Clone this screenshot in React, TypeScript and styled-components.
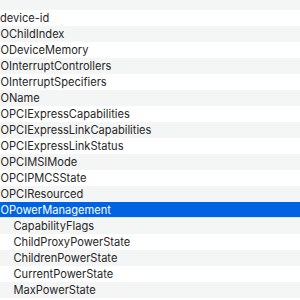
import React from 'react';
import styled, { createGlobalStyle } from 'styled-components';

const GlobalStyle = createGlobalStyle`
    html, body {
        margin: 0;
        padding: 0;
        background: #ffffff;
        overflow: hidden;
    }
`;

const List = styled.div`
    width: 300px;
    height: 300px;
    overflow: hidden;
    font-family: Inter, "Liberation Sans", Arial, sans-serif;
    font-size: 11.1px;
`;

const Inner = styled.div`
    margin-top: -6px;
    display: flex;
    flex-direction: column;
`;

const Row = styled.div<{ $odd: boolean; $selected?: boolean; $indent: number }>`
    height: 16px;
    flex: none;
    padding-left: ${props => props.$indent}px;
    background: ${props =>
        props.$selected ? '#0063e1' : props.$odd ? '#f4f5f5' : '#ffffff'};
    box-shadow: ${props => (props.$selected ? 'inset 0 -1px 0 #d9e6f7' : 'none')};
    color: ${props => (props.$selected ? '#ffffff' : '#262626')};
    white-space: nowrap;
    line-height: 16px;
`;

type Item = { label: string; indent: number; selected?: boolean };

const items: Item[] = [
    { label: '', indent: 0 },
    { label: 'device-id', indent: 0 },
    { label: 'OChildIndex', indent: 0.5 },
    { label: 'ODeviceMemory', indent: 0.5 },
    { label: 'OInterruptControllers', indent: 0.5 },
    { label: 'OInterruptSpecifiers', indent: 0.5 },
    { label: 'OName', indent: 0.5 },
    { label: 'OPCIExpressCapabilities', indent: 0.5 },
    { label: 'OPCIExpressLinkCapabilities', indent: 0.5 },
    { label: 'OPCIExpressLinkStatus', indent: 0.5 },
    { label: 'OPCIMSIMode', indent: 0.5 },
    { label: 'OPCIPMCSState', indent: 0.5 },
    { label: 'OPCIResourced', indent: 0.5 },
    { label: 'OPowerManagement', indent: 0.5, selected: true },
    { label: 'CapabilityFlags', indent: 13.5 },
    { label: 'ChildProxyPowerState', indent: 13.5 },
    { label: 'ChildrenPowerState', indent: 13.5 },
    { label: 'CurrentPowerState', indent: 13.5 },
    { label: 'MaxPowerState', indent: 13.5 },
    { label: 'DesiredPowerState', indent: 13.5 },
];

export default function App() {
    return (
        <>
            <GlobalStyle />
            <List>
                <Inner>
                    {items.map((item, i) => (
                        <Row
                            key={i}
                            $odd={i % 2 === 0}
                            $selected={item.selected}
                            $indent={item.indent}
                        >
                            {item.label}
                        </Row>
                    ))}
                </Inner>
            </List>
        </>
    );
}
